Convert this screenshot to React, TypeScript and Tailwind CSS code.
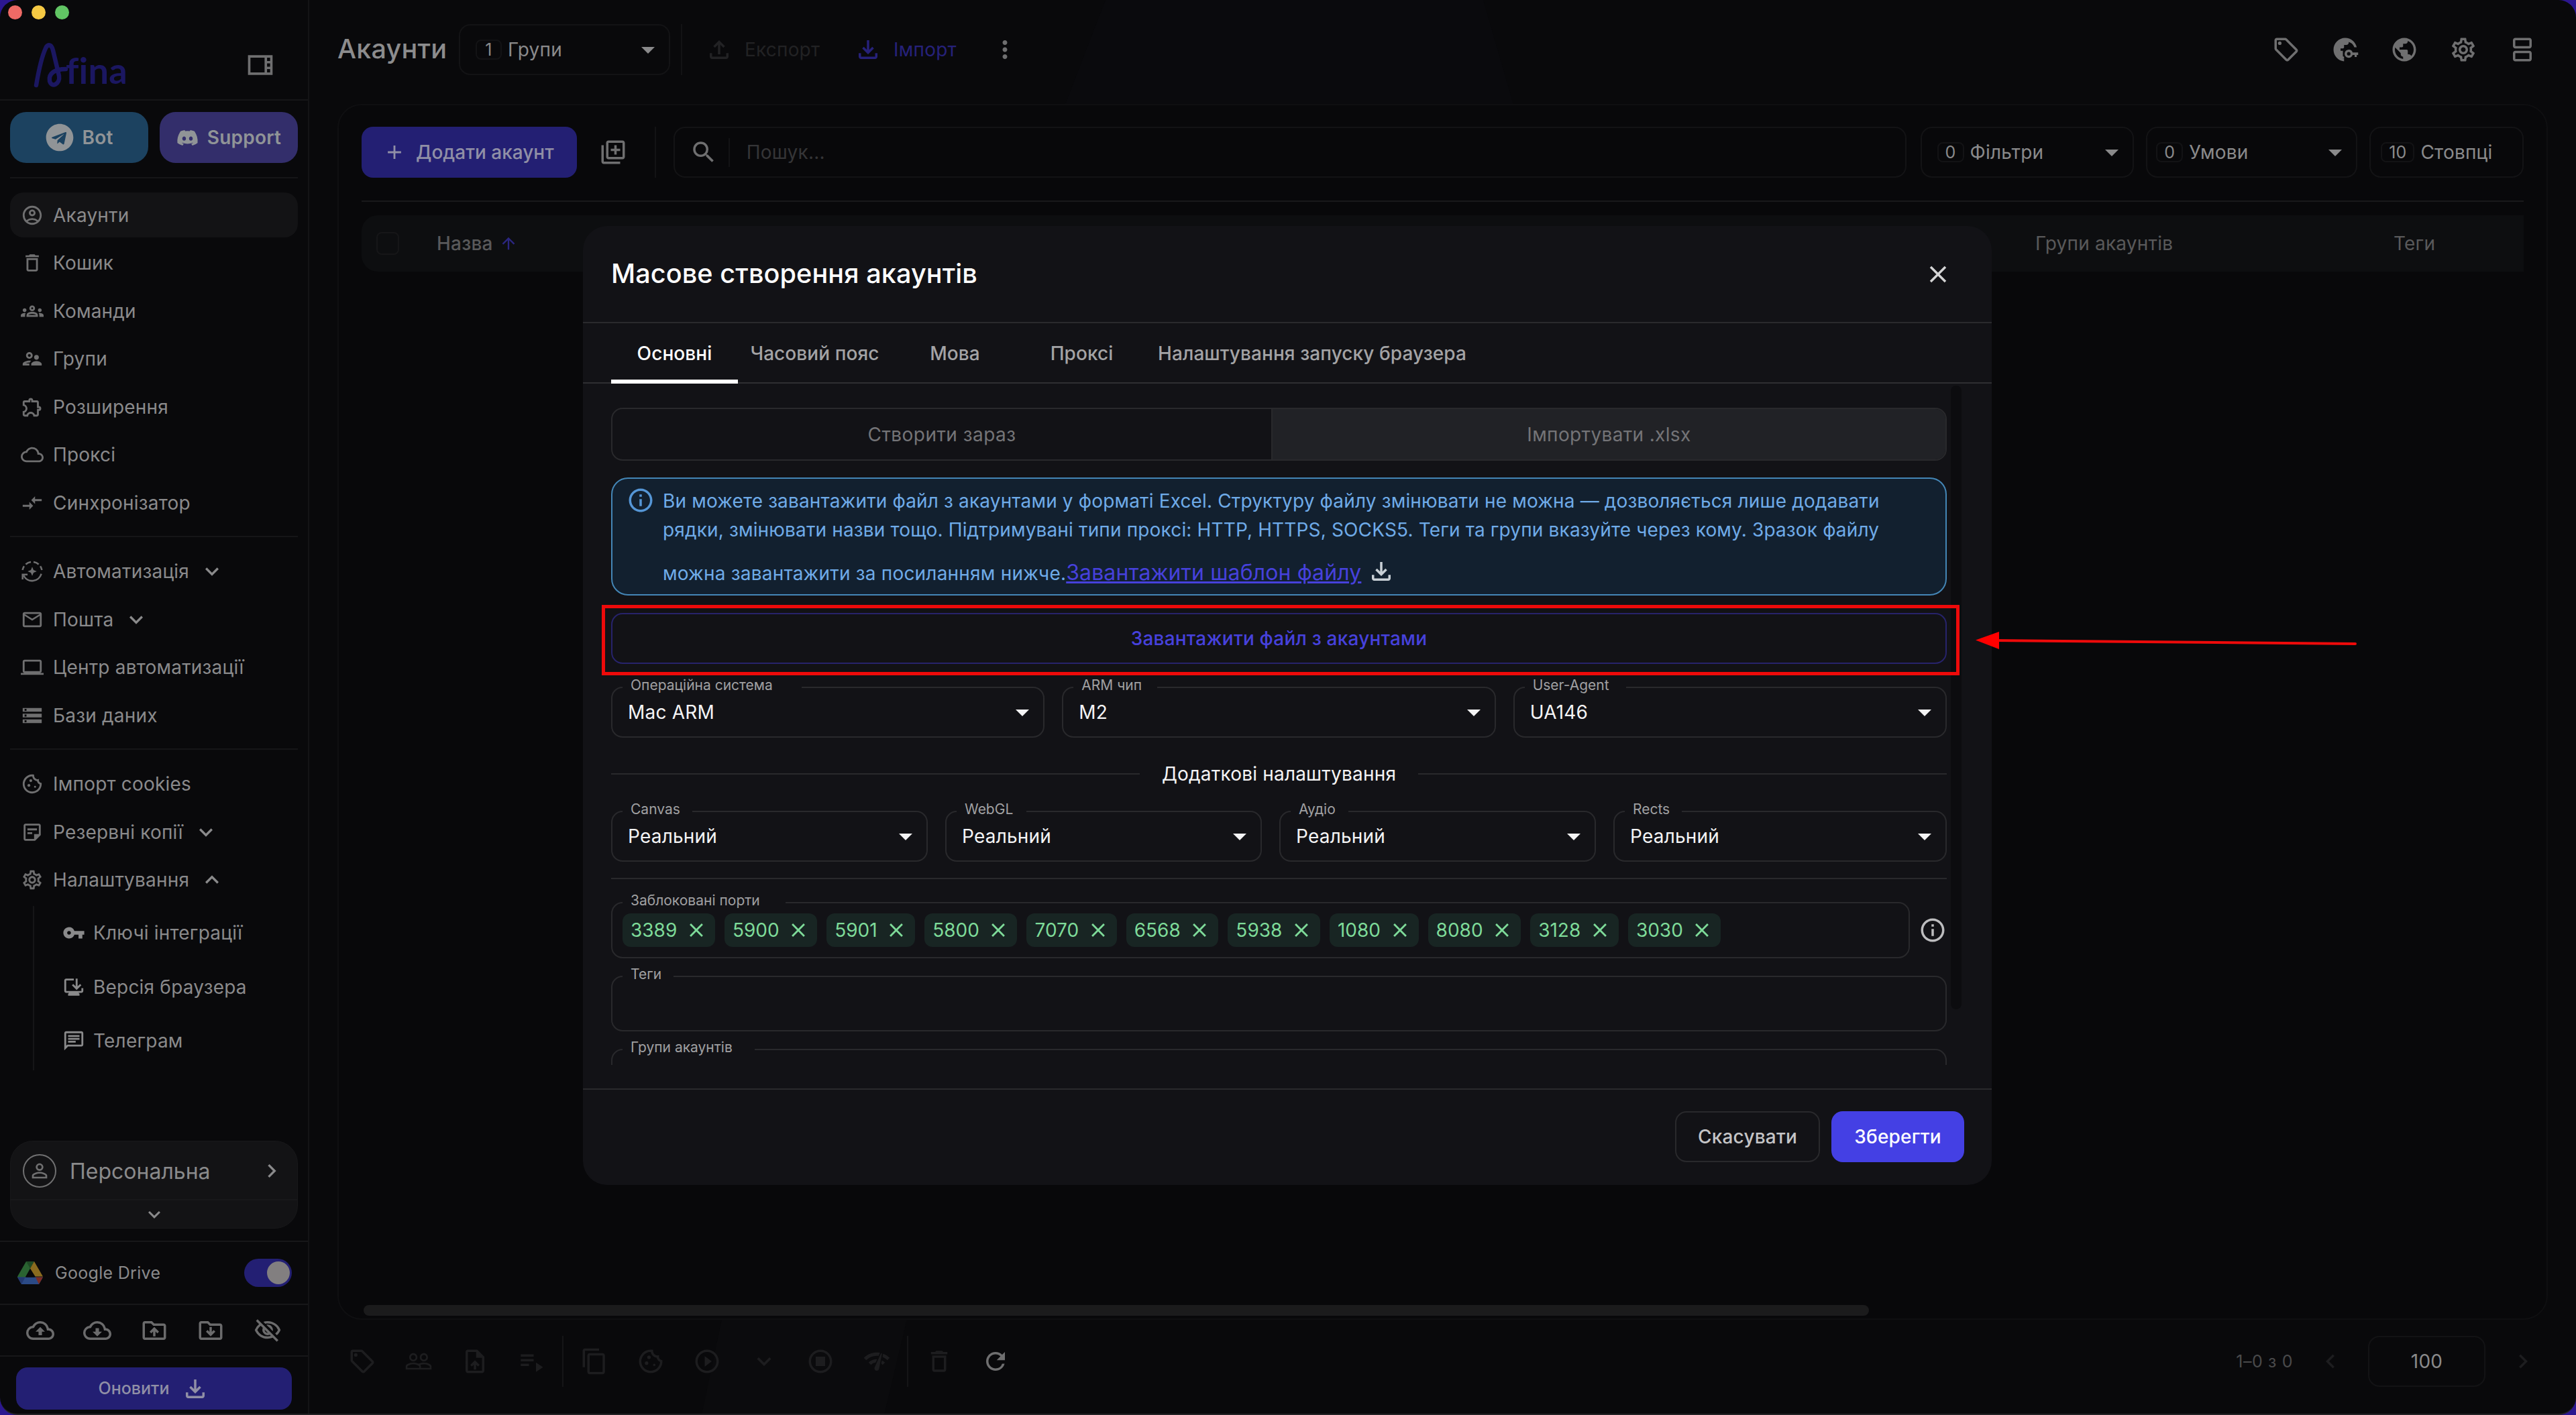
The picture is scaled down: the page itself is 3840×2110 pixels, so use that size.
import React from "react";
import {
  MdAdd,
  MdArrowDropDown,
  MdArrowUpward,
  MdClose,
  MdCompareArrows,
  MdContentCopy,
  MdExpandLess,
  MdExpandMore,
  MdChevronLeft,
  MdChevronRight,
  MdInfoOutline,
  MdMailOutline,
  MdMoreVert,
  MdNetworkCheck,
  MdOutlineAccountCircle,
  MdOutlineBrowserUpdated,
  MdOutlineChat,
  MdOutlineCloudDownload,
  MdOutlineCloudQueue,
  MdOutlineCloudUpload,
  MdOutlineCookie,
  MdDeleteOutline,
  MdOutlineDriveFolderUpload,
  MdOutlineExtension,
  MdOutlineFileDownload,
  MdOutlineFileUpload,
  MdOutlineGroups,
  MdOutlineLibraryAdd,
  MdOutlineSell,
  MdOutlineSettings,
  MdOutlineSplitscreen,
  MdOutlineStopCircle,
  MdOutlineSupervisorAccount,
  MdOutlineUploadFile,
  MdOutlineViewSidebar,
  MdOutlineVisibilityOff,
  MdPeopleOutline,
  MdPersonOutline,
  MdPlayCircleOutline,
  MdPlaylistPlay,
  MdPublic,
  MdRefresh,
  MdSearch,
  MdStorage,
  MdLaptop,
  MdVpnKey,
} from "react-icons/md";
import { FaDiscord, FaTelegram } from "react-icons/fa";

const AutomationIcon = ({ className }: any) => (
  <svg viewBox="0 0 24 24" className={className} fill="none" stroke="currentColor" strokeWidth="1.8">
    <path d="M21.6 14.6a10 10 0 0 1-18.6 1.8" />
    <path d="M1.8 10.6a10 10 0 0 1 1.7-4M5.2 4.6a10 10 0 0 1 5.4-2.5M13.4 2.1a10 10 0 0 1 5.4 2.5M20.5 6.6a10 10 0 0 1 1.7 4" />
    <path d="M1.9 20.5v-5.2h5.2" />
    <path
      d="M12 7.2l1.4 3.4 3.4 1.4-3.4 1.4L12 16.8l-1.4-3.4L7.2 12l3.4-1.4z"
      fill="currentColor"
      stroke="none"
    />
  </svg>
);

const NoteIcon = ({ className }: any) => (
  <svg viewBox="0 0 24 24" className={className} fill="currentColor">
    <path d="M19 5v9h-5v5H5V5h14m0-2H5c-1.1 0-2 .9-2 2v14c0 1.1.9 2 2 2h10l6-6V5c0-1.1-.9-2-2-2zm-7 11H7v-2h5v2zm5-4H7V8h10v2z" />
  </svg>
);

const FolderDownIcon = ({ className }: any) => (
  <svg viewBox="0 0 24 24" className={className} fill="currentColor">
    <path d="M20 6h-8l-2-2H4c-1.1 0-2 .9-2 2v12c0 1.1.9 2 2 2h16c1.1 0 2-.9 2-2V8c0-1.1-.9-2-2-2zm0 12H4V6h5.17l2 2H20v10z" />
    <path d="M16 12.99l-1.41-1.41L13 13.17V9h-2v4.17l-1.59-1.59L8 12.99 12.01 17z" />
  </svg>
);

const GlobeKeyIcon = ({ className }: any) => (
  <svg viewBox="0 0 24 24" className={className} fill="currentColor">
    <path d="M11 19.93C7.05 19.44 4 16.08 4 12c0-.62.08-1.21.21-1.79L9 15v1c0 1.1.9 2 2 2v4C5.9 21.5 2 17.2 2 12 2 6.48 6.48 2 12 2c4.8 0 8.8 3.4 9.8 8h-2.1c-.6-2-2-3.7-4.7-4.6V6c0 1.1-.9 2-2 2h-2v2c0 .55-.45 1-1 1H8v2h2v6.93z" />
    <path
      fillRule="evenodd"
      d="M15 12a3.5 3.5 0 1 0 3.3 4.6H20v1.7h1.8v-1.7H23v-2.2h-4.7A3.5 3.5 0 0 0 15 12zm0 2a1.5 1.5 0 1 1 0 3 1.5 1.5 0 0 1 0-3z"
    />
  </svg>
);

const DriveLogo = () => (
  <svg viewBox="0 0 38 34" className="h-[34px] w-[38px]">
    <path d="M13 0h12l-6 10.5L7.5 31 1.5 26 0 22.5z" fill="#2a6331" />
    <path d="M13 0h12l-6 10.5z" fill="#1f4a25" />
    <path d="M25 0l13 22.5H26.5L19 10.5z" fill="#8a6b1f" />
    <path d="M0 23.5h38l-6 10.5H6z" fill="#2b4a86" />
    <path d="M27 23.5h11l-6 10.5z" fill="#7c2d25" />
    <path d="M0 23.5h11.5L6 34z" fill="#22386f" />
    <path d="M19 12l6.5 11.5h-13z" fill="#09090b" />
  </svg>
);

const AfinaLogo = () => (
  <svg viewBox="0 0 160 84" className="h-[84px] w-[160px]">
    <path
      d="M8 68 C12 44 17 24 22 13 C25 6 31 7 33 16 L42 54 C44 66 31 73 28 62 C26 50 36 44 52 44"
      fill="none"
      stroke="#1b1761"
      strokeWidth="6.5"
      strokeLinecap="round"
    />
    <text
      x="52"
      y="66"
      fontSize="54"
      fontWeight="700"
      fontFamily="Lato, sans-serif"
      fill="#1b1761"
      textLength="92"
      lengthAdjust="spacingAndGlyphs"
    >
      fina
    </text>
  </svg>
);

const NavItem = ({ icon: Icon, label, active, expand }: any) => (
  <div
    className={
      "mb-[4.5px] flex h-[67px] shrink-0 items-center rounded-[20px] pl-4 text-[28px] text-[#8a8a8b] " +
      (active ? "bg-[#131315]" : "")
    }
  >
    <Icon className="size-[34px] text-[#6f6f70]" />
    <span className="ml-[14px]">{label}</span>
    {expand === "down" && <MdExpandMore className="ml-[14px] size-10" />}
    {expand === "up" && <MdExpandLess className="ml-[14px] size-10" />}
  </div>
);

const mainNav = [
  { icon: MdOutlineAccountCircle, label: "Акаунти", active: true },
  { icon: MdDeleteOutline, label: "Кошик" },
  { icon: MdOutlineGroups, label: "Команди" },
  { icon: MdOutlineSupervisorAccount, label: "Групи" },
  { icon: MdOutlineExtension, label: "Розширення" },
  { icon: MdOutlineCloudQueue, label: "Проксі" },
  { icon: MdCompareArrows, label: "Синхронізатор" },
];

const automationNav = [
  { icon: AutomationIcon, label: "Автоматизація", expand: "down" },
  { icon: MdMailOutline, label: "Пошта", expand: "down" },
  { icon: MdLaptop, label: "Центр автоматизації" },
  { icon: MdStorage, label: "Бази даних" },
];

const settingsNav = [
  { icon: MdOutlineCookie, label: "Імпорт cookies" },
  { icon: NoteIcon, label: "Резервні копії", expand: "down" },
  { icon: MdOutlineSettings, label: "Налаштування", expand: "up" },
];

const subNav = [
  { icon: MdVpnKey, label: "Ключі інтеграції" },
  { icon: MdOutlineBrowserUpdated, label: "Версія браузера" },
  { icon: MdOutlineChat, label: "Телеграм" },
];

const Sidebar = () => (
  <aside className="flex h-full w-[461px] shrink-0 flex-col border-r-2 border-[#141416]">
    <div className="flex h-[150px] shrink-0 flex-col border-b-2 border-[#151517] pt-2">
      <div className="flex gap-[14px] pl-3">
        <span className="size-[21px] rounded-full bg-[#ee6a66]" />
        <span className="size-[21px] rounded-full bg-[#f5c944]" />
        <span className="size-[21px] rounded-full bg-[#61c564]" />
      </div>
      <div className="mt-[30px] flex justify-between pr-[49px] pl-[46px]">
        <AfinaLogo />
        <MdOutlineViewSidebar className="mt-4 size-11 text-[#6f6f70]" />
      </div>
    </div>

    <div className="mt-[17px] flex shrink-0 gap-[17px] px-[15px] text-[28px] font-semibold text-[#909497]">
      <button className="flex h-[76px] w-[206px] items-center justify-center gap-[13px] rounded-[24px] bg-[#1c4260]">
        <FaTelegram className="size-[42px]" />
        Bot
      </button>
      <button className="flex h-[76px] w-[206px] items-center justify-center gap-[13px] rounded-[24px] bg-[#332e6b]">
        <FaDiscord className="size-[33px]" />
        Support
      </button>
    </div>

    <div className="mx-[15px] mt-[21px] h-0.5 shrink-0 bg-[#151517]" />
    <nav className="mt-[21px] flex flex-col px-[15px]">
      {mainNav.map((item) => (
        <NavItem key={item.label} {...item} />
      ))}
    </nav>
    <div className="mx-[15px] mt-[11.5px] h-0.5 shrink-0 bg-[#151517]" />
    <nav className="mt-[17.5px] flex flex-col px-[15px]">
      {automationNav.map((item) => (
        <NavItem key={item.label} {...item} />
      ))}
    </nav>
    <div className="mx-[15px] mt-[11px] h-0.5 shrink-0 bg-[#151517]" />
    <nav className="mt-[18px] flex flex-col px-[15px]">
      {settingsNav.map((item) => (
        <NavItem key={item.label} {...item} />
      ))}
    </nav>
    <div className="mt-px ml-[49px] flex h-[245px] shrink-0 flex-col border-l-2 border-[#151517]">
      {subNav.map(({ icon: Icon, label }) => (
        <div key={label} className="flex h-[80.5px] items-center pl-[42px] text-[28px] text-[#8a8a8b]">
          <Icon className="size-[34px]" />
          <span className="ml-[12px]">{label}</span>
        </div>
      ))}
    </div>

    <div className="mt-auto">
      <div className="mx-[15px] flex h-[131px] flex-col rounded-[34px] border border-[#18181a] bg-[#131315]">
        <div className="flex h-[88px] items-center border-b-2 border-[#18181a] pt-0.5 pr-[18px] pl-[18px]">
          <span className="flex size-[50px] items-center justify-center rounded-full border-2 border-[#707071] text-[#707071]">
            <MdPersonOutline className="size-[34px]" />
          </span>
          <span className="ml-5 pt-0.5 text-[32px] tracking-normal text-[#8a8a8b]">Персональна</span>
          <MdChevronRight className="ml-auto size-10 text-[#8a8a8b]" />
        </div>
        <div className="flex flex-1 items-center justify-center">
          <MdExpandMore className="size-9 text-[#8a8a8b]" />
        </div>
      </div>
      <div className="mt-[18px] flex h-[94px] items-center border-t-2 border-[#171719] pl-[26px] text-[25px] text-[#8a8a8b]">
        <DriveLogo />
        <span className="ml-[18px] tracking-[0.3px]">Google Drive</span>
        <span className="mr-6 ml-auto flex h-[42px] w-[71px] items-center justify-end rounded-full bg-[#231f73] pr-[3px]">
          <span className="size-[34px] rounded-full bg-[#827f80]" />
        </span>
      </div>
      <div className="flex h-[77px] items-center justify-between border-t-2 border-[#171719] pr-[39px] pl-[39px] text-[#6b6b6c]">
        <MdOutlineCloudUpload className="size-[42px]" />
        <MdOutlineCloudDownload className="size-[42px]" />
        <MdOutlineDriveFolderUpload className="size-[42px]" />
        <FolderDownIcon className="size-[42px]" />
        <MdOutlineVisibilityOff className="size-[42px]" />
      </div>
      <div className="h-[87px] border-t-2 border-[#171719] pt-4 pr-6 pl-6">
        <button className="flex h-[63px] w-full items-center justify-center gap-[18px] rounded-[17px] bg-[#231f73] text-[25px] font-medium tracking-normal text-[#908fa6]">
          Оновити
          <MdOutlineFileDownload className="size-[42px]" />
        </button>
      </div>
    </div>
  </aside>
);

const CountSelect = ({ count, label, className, arrow = true }: any) => (
  <div
    className={
      "flex h-[76px] items-center rounded-[17px] border-2 border-[#131315] text-[28px] text-[#8a8a8b] " + className
    }
  >
    <span className="flex h-[30px] min-w-[39px] items-center justify-center rounded-lg border-2 border-[#131315] px-[10px] text-[25px]">
      {count}
    </span>
    <span className="ml-[9px]">{label}</span>
    {arrow && <MdArrowDropDown className="mr-[7px] ml-auto size-12" />}
  </div>
);

const Header = () => (
  <header className="flex h-[155px] shrink-0 items-start pt-9 pr-[59px] pl-[42px]">
    <div className="flex h-[76px] w-full items-center">
      <h1 className="w-[181px] text-[39.6px] font-medium text-[#8c8c8d]">Акаунти</h1>
      <CountSelect count="1" label="Групи" className="w-[315px] pl-[23px]" />
      <div className="ml-[16px] h-[76px] w-0.5 bg-[#131315]" />
      <button className="ml-[34px] flex items-center text-[28px] text-[#222224]">
        <MdOutlineFileUpload className="size-[42px]" />
        <span className="ml-[17px] w-[112px] text-left">Експорт</span>
      </button>
      <button className="ml-[51px] flex items-center text-[28px] text-[#26217a]">
        <MdOutlineFileDownload className="size-[42px]" />
        <span className="ml-[17px] w-[94px] text-left">Імпорт</span>
      </button>
      <MdMoreVert className="ml-[51px] size-[42px] text-[#6f6f70]" />
      <div className="ml-auto flex gap-[46px] text-[#6f6f70]">
        <MdOutlineSell className="size-[42px]" />
        <GlobeKeyIcon className="size-[42px]" />
        <MdPublic className="size-[42px]" />
        <MdOutlineSettings className="size-[42px]" />
        <MdOutlineSplitscreen className="size-[42px]" />
      </div>
    </div>
  </header>
);

const Table = () => (
  <section className="relative mr-[42px] ml-[42px] flex h-[1813px] shrink-0 flex-col rounded-[36px] border-2 border-[#0f0f11] bg-[#08080a] px-[34px] pt-8">
    <div className="flex h-[76px] items-center">
      <button className="flex h-[76px] w-[321px] items-center rounded-[17px] bg-[#231f73] pl-[32px] text-[28px] font-medium tracking-normal text-[#908fa6]">
        <MdAdd className="size-[34px]" />
        <span className="ml-[15px]">Додати акаунт</span>
      </button>
      <MdOutlineLibraryAdd className="ml-[33px] size-[42px] text-[#6f6f70]" />
      <div className="ml-[41px] h-[76px] w-0.5 bg-[#131315]" />
      <div className="ml-[26px] flex h-[76px] w-[1839px] items-center rounded-[17px] border-2 border-[#131315] pl-[22px] text-[28px] text-[#353537]">
        <MdSearch className="size-[42px] text-[#6f6f70]" />
        <div className="ml-[16px] h-[43px] w-0.5 bg-[#131315]" />
        <span className="ml-[25px]">Пошук...</span>
      </div>
      <CountSelect count="0" label="Фільтри" className="ml-[21px] w-[319px] pl-[23px]" />
      <CountSelect count="0" label="Умови" className="ml-[18px] w-[315px] pl-[13px]" />
      <CountSelect count="10" label="Стовпці" className="ml-[18px] w-[230px] pl-[15px]" arrow={false} />
    </div>
    <div className="mt-[34px] h-0.5 shrink-0 bg-[#19191b]" />
    <div className="mt-5 flex h-[84px] shrink-0 items-center rounded-l-[24px] bg-[#0d0e10] pl-[22px] text-[28px] font-medium text-[#59595a]">
      <span className="size-[34px] rounded-lg border-2 border-[#161618]" />
      <span className="ml-[56px]">Назва</span>
      <MdArrowUpward className="ml-[9px] size-[28px] text-[#2b2680]" />
      <span className="ml-auto w-[534px] font-normal">Групи акаунтів</span>
      <span className="w-[194px] font-normal">Теги</span>
    </div>
    <div className="mt-auto mb-1 ml-[3px] h-4 w-[2244px] rounded-full bg-[#1b1b1c]" />
  </section>
);

const Footer = () => (
  <footer className="flex h-[124px] shrink-0 items-center pr-[58px] pl-[58px] text-[#1d1d1f]">
    <div className="flex items-center gap-[42px]">
      <MdOutlineSell className="size-[42px]" />
      <MdPeopleOutline className="size-[42px]" />
      <MdOutlineUploadFile className="size-[42px]" />
      <MdPlaylistPlay className="size-[42px]" />
    </div>
    <div className="mr-[25px] ml-[25px] h-[76px] w-0.5 bg-[#151517]" />
    <div className="flex items-center gap-[42.2px]">
      <MdContentCopy className="size-[42px]" />
      <MdOutlineCookie className="size-[42px]" />
      <MdPlayCircleOutline className="size-[42px]" />
      <MdExpandMore className="size-[42px]" />
      <MdOutlineStopCircle className="size-[42px]" />
      <MdNetworkCheck className="size-[42px]" />
    </div>
    <div className="mr-[25px] ml-[24px] h-[76px] w-0.5 bg-[#151517]" />
    <MdDeleteOutline className="size-[42px]" />
    <MdRefresh className="ml-[42px] size-[42px] text-[#6f6f70]" />
    <span className="ml-auto text-[25px] tracking-[0.6px] text-[#4a4a4b]">1–0 з 0</span>
    <MdChevronLeft className="ml-[35px] size-[42px]" />
    <span className="ml-[35px] flex h-[76px] w-[175px] items-center justify-center rounded-[17px] border-2 border-[#131315] text-[28px] text-[#8a8a8b]">
      100
    </span>
    <MdChevronRight className="ml-[35px] size-[42px]" />
  </footer>
);

// outlined input with its label sitting in a gap of the border
const Field = ({ label, gap, className, children }: any) => (
  <div className={"relative flex items-center rounded-[17px] border-2 border-[#29292c] " + className}>
    <span
      className={
        "absolute -top-[20px] left-[15px] flex h-[30px] items-center bg-[#121216] pl-[12px] text-[21px] tracking-normal whitespace-nowrap text-[#a0a0a2] " +
        gap
      }
    >
      {label}
    </span>
    {children}
  </div>
);

const Select = ({ label, gap, value, className }: any) => (
  <Field label={label} gap={gap} className={"h-[76px] pl-[23px] text-[28px] text-[#f4f4f5] " + className}>
    <span>{value}</span>
    <MdArrowDropDown className="mr-[7px] ml-auto size-12" />
  </Field>
);

const ports = ["3389", "5900", "5901", "5800", "7070", "6568", "5938", "1080", "8080", "3128", "3030"];

const Modal = () => (
  <div className="absolute top-[337px] left-[869px] flex h-[1430px] w-[2100px] flex-col rounded-[36px] bg-[#121216]">
    <div className="flex h-[145px] shrink-0 items-center justify-between border-b-2 border-[#2a2a2d] pr-[59px] pl-[42px]">
      <h2 className="pt-px text-[39.6px] font-medium tracking-[0.1px] text-white">Масове створення акаунтів</h2>
      <MdClose className="size-[42px] text-[#d4d4d5]" />
    </div>

    <div className="flex h-[90px] shrink-0 items-stretch border-b-2 border-[#2f2f32] pl-[42px] text-[28px] font-medium tracking-[0.08px] text-[#a3a3a5]">
      <div className="-mb-0.5 flex w-[189px] items-center justify-center border-b-[6px] border-white text-white">
        <span className="mt-1.5">Основні</span>
      </div>
      <div className="flex w-[229px] items-center justify-center pt-0.5">Часовий пояс</div>
      <div className="flex w-[189px] items-center justify-center pt-0.5">Мова</div>
      <div className="flex w-[189px] items-center justify-center pt-0.5">Проксі</div>
      <div className="flex w-[498px] items-center justify-center pt-0.5">Налаштування запуску браузера</div>
    </div>

    <div className="flex h-[1051px] shrink-0">
      <div className="ml-[42px] flex h-[1016px] w-[1991px] flex-col overflow-hidden pt-9">
        <div className="flex h-[79px] shrink-0 overflow-hidden rounded-[17px] border-2 border-[#29292c] text-[28px] tracking-[0.45px] text-[#747477]">
          <div className="flex w-[982px] items-center justify-center">Створити зараз</div>
          <div className="flex flex-1 items-center justify-center border-l-2 border-[#29292c] bg-[#212226] tracking-[0.35px]">
            Імпортувати .xlsx
          </div>
        </div>

        <div className="mt-[25px] flex h-[176px] shrink-0 rounded-[25px] border-2 border-[#4486b6] bg-[#12202f] pt-[11px] pl-[21px] text-[28px] tracking-[0.15px] text-[#6fabe8]">
          <MdInfoOutline className="size-[42px] text-[#5596d6]" />
          <div className="ml-[12px] whitespace-nowrap">
            <p className="mt-px leading-[43px]">
              Ви можете завантажити файл з акаунтами у форматі Excel. Структуру файлу змінювати не можна — дозволяється
              лише додавати
            </p>
            <p className="leading-[43px]">
              рядки, змінювати назви тощо. Підтримувані типи проксі: HTTP, HTTPS, SOCKS5. Теги та групи вказуйте через
              кому. Зразок файлу
            </p>
            <div className="mt-[18px] flex h-[43px] items-center">
              <p className="pt-1">
                <span className="tracking-[0.2px]">можна завантажити за посиланням нижче.</span>
                <a className="text-[32px] tracking-[0.1px] text-[#4641dc] underline">Завантажити шаблон файлу</a>
              </p>
              <MdOutlineFileDownload className="ml-[9px] size-[42px] text-[#c9d0d6]" />
            </div>
          </div>
        </div>

        <button className="mt-[26px] h-[76px] shrink-0 rounded-[17px] border-2 border-[#27236b] text-[28px] font-medium text-[#4641dc]">
          Завантажити файл з акаунтами
        </button>

        <div className="mt-[34px] grid shrink-0 grid-cols-3 gap-[26px]">
          <Select label="Операційна система" gap="w-[267px]" value="Mac ARM" />
          <Select label="ARM чип" gap="w-[125px]" value="M2" />
          <Select label="User-Agent" gap="w-[151px]" value="UA146" />
        </div>

        <div className="mt-[36px] flex h-[36px] shrink-0 items-center text-[28px] text-[#f4f4f5]">
          <div className="h-0.5 flex-1 bg-[#29292c]" />
          <span className="px-[33px]">Додаткові налаштування</span>
          <div className="h-0.5 flex-1 bg-[#29292c]" />
        </div>

        <div className="mt-[37px] flex shrink-0 gap-[26px]">
          <Select label="Canvas" gap="w-[104px]" value="Реальний" className="w-[472px]" />
          <Select label="WebGL" gap="w-[104px]" value="Реальний" className="w-[472px]" />
          <Select label="Аудіо" gap="w-[86px]" value="Реальний" className="w-[472px]" />
          <Select label="Rects" gap="w-[85px]" value="Реальний" className="flex-1" />
        </div>

        <div className="mt-[24px] h-0.5 shrink-0 bg-[#29292c]" />

        <div className="mt-[34px] flex shrink-0 items-center">
          <Field
            label="Заблоковані порти"
            gap="w-[243px]"
            className="h-[84px] w-[1936px] gap-[14px] pl-[15px] tracking-normal"
          >
            {ports.map((p) => (
              <span
                key={p}
                className="flex h-[50px] items-center rounded-xl bg-[#182523] pr-[11px] pl-3 text-[28px] text-[#7edb99]"
              >
                {p}
                <MdClose className="ml-[11.6px] size-[34px]" />
              </span>
            ))}
          </Field>
          <MdInfoOutline className="ml-[13px] size-[42px] text-[#bdbdbf]" />
        </div>

        <Field label="Теги" gap="w-[76px]" className="mt-[26px] h-[83px] shrink-0" />
        <Field label="Групи акаунтів" gap="w-[197px]" className="mt-[26px] h-[83px] shrink-0" />
      </div>
      <div className="mt-[3px] ml-[6px] h-[930px] w-4 rounded-full bg-[#0c0c0f]" />
    </div>

    <div className="flex h-[144px] shrink-0 items-start justify-end gap-[17px] border-t-2 border-[#2a2a2d] pt-8 pr-[41px] text-[28px] font-medium">
      <button className="h-[76px] w-[216px] rounded-[17px] border-2 border-[#29292c] text-[#c4c4c6]">Скасувати</button>
      <button className="h-[76px] w-[198px] rounded-[17px] bg-[#4440e4] text-white">Зберегти</button>
    </div>
  </div>
);

export default function App() {
  return (
    <div className="h-[2110px] w-[3840px] overflow-hidden bg-[#2c1790] font-['Inter',sans-serif] leading-none tracking-[0.2px]">
      <div className="relative flex h-[2110px] w-[3840px] overflow-hidden rounded-[26px] border-b-2 border-[#232325] bg-[#09090b]">
        <Sidebar />
        <main className="relative flex min-w-0 flex-1 flex-col">
          {/* faint brand letter behind the page */}
          <svg viewBox="0 0 3379 2110" className="absolute inset-0 h-[2110px] w-[3379px]">
            <path d="M1187 0L1127 155H1795L1750 0z" fill="#0a0a0d" />
            <path d="M615 1967L585 2110H857L891 1967z" fill="#0b0b0d" />
          </svg>
          <div className="relative flex flex-col">
            <Header />
            <Table />
            <Footer />
          </div>
        </main>
        <Modal />

        {/* highlight frame and arrow on the upload button */}
        <div className="absolute top-[902px] left-[897px] h-[105px] w-[2024px] border-[5px] border-[#ee0a0a]" />
        <svg viewBox="0 0 572 32" className="absolute top-[940px] left-[2944px] h-8 w-[572px]">
          <path d="M30 15L567 20" stroke="#ee0a0a" strokeWidth="4" strokeLinecap="round" />
          <path d="M1 14.5L36 2V28z" fill="#ff0000" />
        </svg>
      </div>
    </div>
  );
}
